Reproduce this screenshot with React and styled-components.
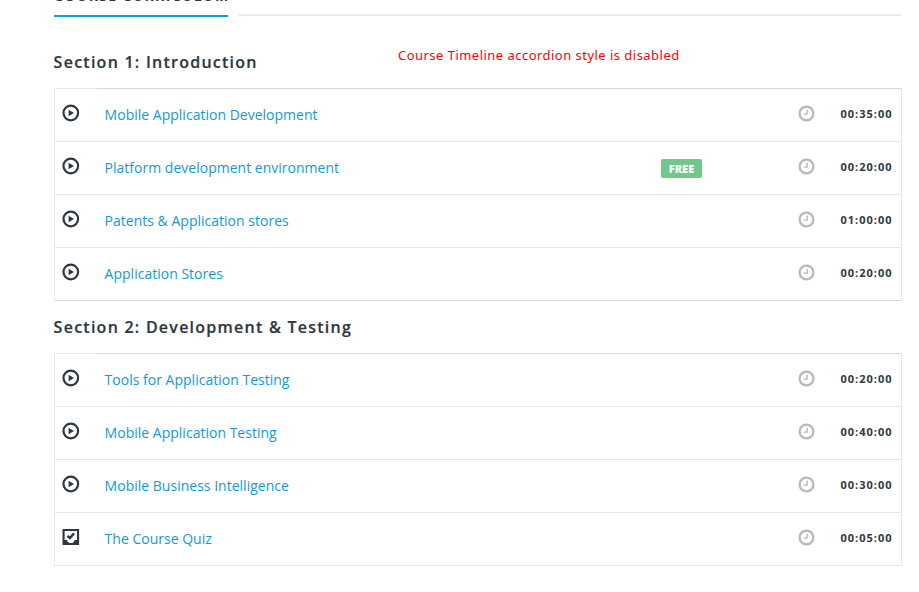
import React from "react";
import styled, { createGlobalStyle } from "styled-components";

const Global = createGlobalStyle`
  *, *::before, *::after { box-sizing: border-box; }
  html, body { margin: 0; background: #fff; overflow: hidden; }
  body { font-family: "Open Sans", "Noto Sans", sans-serif; color: #2f3740; }
`;

const Page = styled.main`
  width: 919px;
  height: 592px;
  padding: 0 17px 0 54px;
  overflow: hidden;
`;
const Tabs = styled.header`
  height: 17px;
  display: flex;
  gap: 10px;
  padding-right: 1px;
`;
const Tab = styled.h2`
  width: 174px;
  height: 17px;
  margin: 0;
  display: flex;
  align-items: flex-end;
  border-bottom: 2px solid #0d9fdb;
  font-size: 14px;
  line-height: 20px;
  font-weight: 700;
  letter-spacing: 1.33px;
  white-space: nowrap;
  padding-bottom: 9px;
`;
const TabRule = styled.div`
  flex: 1;
  height: 16px;
  border-bottom: 2px solid #ebebeb;
`;
const SectionHead = styled.div`
  height: ${(p) => (p.$first ? 71 : 52)}px;
  padding-top: ${(p) => (p.$first ? 33 : 14)}px;
  display: flex;
  align-items: flex-start;
`;
const Title = styled.h3`
  width: 344px;
  margin: 0;
  font-size: 16px;
  line-height: 24px;
  font-weight: 650;
  letter-spacing: 1.25px;
  text-indent: -0.4px;
  -webkit-text-stroke: 0.2px #2f3740;
  white-space: nowrap;
`;
const Note = styled.p`
  margin: -6px 0 0;
  font: 13px/22px "Noto Sans", sans-serif;
  letter-spacing: 0.47px;
  color: #f00;
  white-space: nowrap;
`;
const Lessons = styled.ul`
  width: 848px;
  margin: 0;
  padding: 0;
  list-style: none;
  border: 1px solid #e8e8e8;
  border-top: 0;
  border-bottom-color: ${(p) => (p.$last ? "#e5e5e5" : "#d8d8d8")};
`;
const Lesson = styled.li`
  height: 53px;
  display: grid;
  grid-template-columns: 49.6px 556.4px 136.7px 42.8px 1fr;
  align-items: center;
  border-top: 1px solid #e6e6e6;
  &:first-child {
    border-top: 0;
    background: linear-gradient(to right, #e8e8e8 42px, #d6d6d6 42px) top / 100% 1px no-repeat;
    padding-top: 1px;
  }
`;
const Kind = styled.span`
  display: flex;
  padding-left: 7px;
  margin-top: -5px;
`;
const Name = styled.a`
  color: #1498d5;
  font-size: 14px;
  line-height: 20px;
  letter-spacing: 0.01px;
  white-space: nowrap;
`;
const Badge = styled.span`
  width: 41px;
  height: 19px;
  margin-top: 1px;
  border-radius: 2px;
  background: #70c989;
  color: #fff;
  font-size: 11px;
  line-height: 20px;
  font-weight: 800;
  text-align: center;
`;
const Clock = styled.svg`
  width: 17px;
  height: 17px;
  margin-top: -4px;
`;
const Time = styled.time`
  font-size: 11px;
  line-height: 16px;
  font-weight: 700;
  letter-spacing: 1px;
  margin-top: -3px;
`;

const PlayIcon = () => (
  <svg width="18" height="18" viewBox="0 0 18 18">
    <circle cx="8.8" cy="9" r="7.3" fill="none" stroke="#2f3740" strokeWidth="2.2" />
    <path d="M6.6 5.7 L12 9 L6.6 12.3Z" fill="#2f3740" />
  </svg>
);
const QuizIcon = () => (
  <svg width="18" height="18" viewBox="0 0 18 18">
    <path
      fillRule="evenodd"
      fill="#2f3740"
      d="M.5 1h16.6v16H.5z M2.6 3v9h2.8v2h1.2v1h4.4v-1h1.2v-2h2.8V3z"
    />
    <path d="M5.5 7.8 L7.9 10 L12 5.4" fill="none" stroke="#2f3740" strokeWidth="2.4" />
  </svg>
);
const ClockIcon = () => (
  <Clock viewBox="0 0 17 17">
    <circle cx="8.5" cy="8.5" r="6.9" fill="none" stroke="#b9b9b9" strokeWidth="2.3" />
    <path d="M9.1 4.4V9.1H5.7" fill="none" stroke="#b9b9b9" strokeWidth="1.4" />
  </Clock>
);

const sections = [
  {
    title: "Section 1: Introduction",
    note: "Course Timeline accordion style is disabled",
    lessons: [
      { name: "Mobile Application Development", time: "00:35:00" },
      { name: "Platform development environment", time: "00:20:00", free: true },
      { name: "Patents & Application stores", time: "01:00:00" },
      { name: "Application Stores", time: "00:20:00" },
    ],
  },
  {
    title: "Section 2: Development & Testing",
    lessons: [
      { name: "Tools for Application Testing", time: "00:20:00" },
      { name: "Mobile Application Testing", time: "00:40:00" },
      { name: "Mobile Business Intelligence", time: "00:30:00" },
      { name: "The Course Quiz", time: "00:05:00", quiz: true },
    ],
  },
];

export default function App() {
  return (
    <Page>
      <Global />
      <Tabs>
        <Tab>COURSE CURRICULUM</Tab>
        <TabRule />
      </Tabs>
      {sections.map((section, i) => (
        <section key={section.title}>
          <SectionHead $first={i === 0}>
            <Title>{section.title}</Title>
            {section.note && <Note>{section.note}</Note>}
          </SectionHead>
          <Lessons $last={i === sections.length - 1}>
            {section.lessons.map((l) => (
              <Lesson key={l.name}>
                <Kind>{l.quiz ? <QuizIcon /> : <PlayIcon />}</Kind>
                <Name>{l.name}</Name>
                {l.free ? <Badge>FREE</Badge> : <span />}
                <ClockIcon />
                <Time>{l.time}</Time>
              </Lesson>
            ))}
          </Lessons>
        </section>
      ))}
    </Page>
  );
}
